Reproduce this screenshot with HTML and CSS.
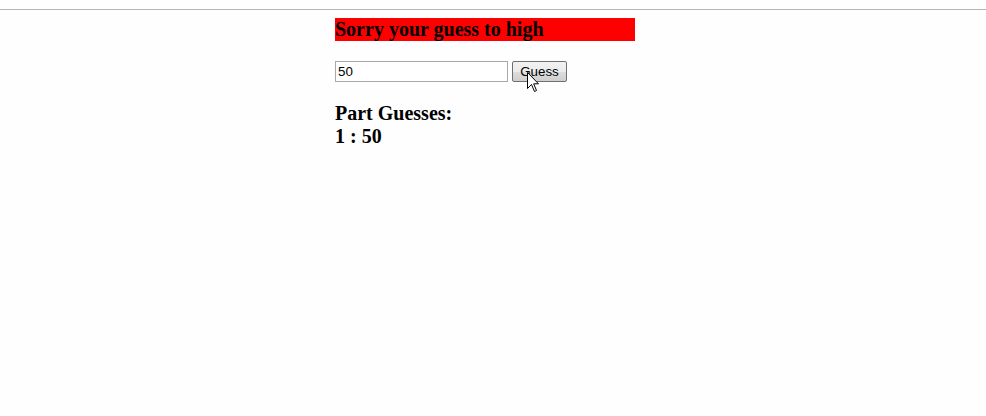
FILE: index.html
```html
<!DOCTYPE html>
<html>
<head>
<meta charset="utf-8">
<link rel="stylesheet" href="styles.css">
</head>
<body>
<div class="rule"></div>
<div class="page">
  <div class="container">
    <h3 class="result">Sorry your guess to high</h3>
    <form class="guess-form">
      <input class="guess-input" type="text" value="50">
      <span class="btn-wrap">
        <button class="guess-btn" type="button">Guess</button>
        <svg class="cursor" width="13" height="21" viewBox="0 0 13 21"><path d="M0.5 0.5 L0.5 16.5 L4.5 12.5 L7.5 19.5 L9.5 18.5 L6.7 11.8 L11.5 11.8 Z" fill="#fff" stroke="#000" stroke-width="1" stroke-linejoin="miter"/></svg>
      </span>
    </form>
    <div class="history">
      <h3 class="history-title">Part Guesses:</h3>
      <h3 class="history-item">1 : 50</h3>
    </div>
  </div>
</div>
</body>
</html>
```
FILE: styles.css
```css
html, body {
  margin: 0;
  padding: 0;
  background: #fefefe;
}
body {
  font-family: "Liberation Serif", "Times New Roman", serif;
  padding-top: 9px;
}
.rule {
  height: 1px;
  background: #b4b4b4;
}
.page {
  padding-right: 16px;
  padding-top: 8px;
}
.container {
  width: 300px;
  margin: 0 auto;
}
.result {
  margin: 0;
  background: #ff0000;
  font-size: 20px;
  font-weight: bold;
  line-height: 23px;
  height: 23px;
  color: #000;
}
.guess-form {
  margin: 20px 0 0 0;
  display: flex;
  align-items: flex-start;
  gap: 4px;
  height: 21px;
}
.guess-input {
  box-sizing: border-box;
  width: 173px;
  height: 21px;
  margin: 0;
  padding: 1px 2px;
  border: 1px solid #a9a9a9;
  font-family: "Liberation Sans", Arial, sans-serif;
  font-size: 13.33px;
  color: #000;
  background: #fff;
}
.btn-wrap {
  position: relative;
  display: inline-block;
}
.guess-btn {
  box-sizing: border-box;
  width: 55px;
  height: 21px;
  margin: 0;
  padding: 0 6px;
  border: 1px solid #707070;
  border-radius: 2px;
  background: linear-gradient(#f2f2f2, #ebebeb 50%, #dddddd 51%, #cfcfcf);
  font-family: "Liberation Sans", Arial, sans-serif;
  font-size: 13.33px;
  color: #000;
}
.cursor {
  position: absolute;
  left: 15px;
  top: 11px;
}
.history {
  margin-top: 20px;
}
.history h3 {
  margin: 0;
  font-size: 20px;
  font-weight: bold;
  line-height: 23px;
  color: #000;
}
```
